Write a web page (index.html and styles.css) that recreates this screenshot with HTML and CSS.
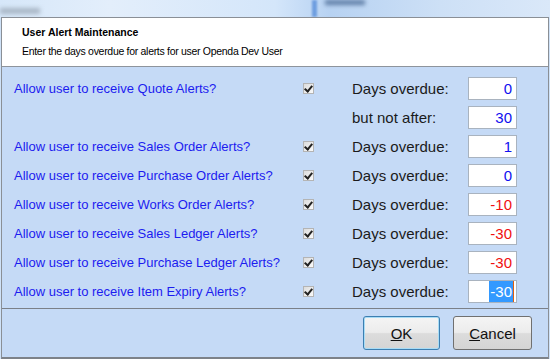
FILE: index.html
```html
<!DOCTYPE html>
<html lang="en">
<head>
    <meta charset="UTF-8">
    <title>User Alert Maintenance</title>
    <link rel="stylesheet" href="styles.css">
</head>
<body>
<div class="backdrop">
    <span class="blur-text"></span>
    <span class="blur-bar"></span>
    <span class="blur-chip"></span>
</div>
<div class="dialog">
    <div class="header">
        <div class="title">User Alert Maintenance</div>
        <div class="subtitle">Enter the days overdue for alerts for user Openda Dev User</div>
    </div>
    <div class="body">
        <div class="rows">
            <div class="label">Allow user to receive Quote Alerts?</div>
            <div class="check"><span class="box on"></span></div>
            <div class="field">Days overdue:</div>
            <div class="num">0</div>

            <div class="label"></div>
            <div class="check"></div>
            <div class="field">but not after:</div>
            <div class="num">30</div>

            <div class="label">Allow user to receive Sales Order Alerts?</div>
            <div class="check"><span class="box on"></span></div>
            <div class="field">Days overdue:</div>
            <div class="num">1</div>

            <div class="label">Allow user to receive Purchase Order Alerts?</div>
            <div class="check"><span class="box on"></span></div>
            <div class="field">Days overdue:</div>
            <div class="num">0</div>

            <div class="label">Allow user to receive Works Order Alerts?</div>
            <div class="check"><span class="box on"></span></div>
            <div class="field">Days overdue:</div>
            <div class="num neg">-10</div>

            <div class="label">Allow user to receive Sales Ledger Alerts?</div>
            <div class="check"><span class="box on"></span></div>
            <div class="field">Days overdue:</div>
            <div class="num neg">-30</div>

            <div class="label">Allow user to receive Purchase Ledger Alerts?</div>
            <div class="check"><span class="box on"></span></div>
            <div class="field">Days overdue:</div>
            <div class="num neg">-30</div>

            <div class="label">Allow user to receive Item Expiry Alerts?</div>
            <div class="check"><span class="box on"></span></div>
            <div class="field">Days overdue:</div>
            <div class="num sel"><span class="hl">-30</span><span class="caret"></span></div>
        </div>
        <div class="footer">
            <button class="btn default"><u>O</u>K</button>
            <button class="btn cancel"><u>C</u>ancel</button>
        </div>
    </div>
</div>
</body>
</html>
```

FILE: styles.css
```css
*{
    margin: 0;
    padding: 0;
    box-sizing: border-box;
}
body{
    width: 550px;
    height: 359px;
    overflow: hidden;
    font-family: "Liberation Sans", Arial, sans-serif;
    background: #cfe2f8;
}
.backdrop{
    position: relative;
    height: 17px;
    background: linear-gradient(90deg, #d6e7f9 0%, #e3eefb 20%, #d4e6fa 50%, #b7d2f2 60%, #cde0f6 80%, #dae8f9 100%);
    overflow: hidden;
}
.blur-text{
    position: absolute;
    left: 0;
    top: 8px;
    width: 40px;
    height: 6px;
    background: #a9b7c6;
    filter: blur(2px);
}
.blur-bar{
    position: absolute;
    left: 312px;
    top: 0;
    width: 5px;
    height: 17px;
    background: #6e9ee0;
    filter: blur(1px);
}
.blur-chip{
    position: absolute;
    left: 325px;
    top: 0;
    width: 40px;
    height: 5px;
    background: #5f7ea6;
    filter: blur(2px);
}
.dialog{
    height: 342px;
    margin: 0 1px 0 1px;
    border: 1px solid #8a8f96;
    border-bottom: 2px solid #7d8289;
    display: flex;
    flex-direction: column;
}
.header{
    height: 49px;
    background: #fff;
    border-bottom: 1px solid #8e949c;
    padding: 6px 0 0 20px;
    font-size: 10.5px;
    color: #000;
}
.title{
    font-weight: bold;
    line-height: 16px;
}
.subtitle{
    margin-top: 3px;
    line-height: 16px;
    letter-spacing: -0.3px;
}
.body{
    flex: 1;
    background: #c5daf6;
    display: flex;
    flex-direction: column;
}
.rows{
    display: grid;
    grid-template-columns: 289px 49px 116px 49px;
    grid-auto-rows: 29px;
    padding: 7px 0 2px 12px;
    border-bottom: 1px solid #7b8088;
    align-items: center;
}
.label{
    color: #1c1cf0;
    font-size: 13px;
    white-space: nowrap;
}
.check{
    display: flex;
    align-items: center;
}
.box{
    width: 11px;
    height: 11px;
    background: linear-gradient(135deg, #dcdcdc, #fafafa);
    border: 1px solid #b4b4b4;
    position: relative;
}
.box.on::after{
    content: "";
    position: absolute;
    left: 2px;
    top: 0;
    width: 3px;
    height: 6px;
    border-right: 2px solid #222;
    border-bottom: 2px solid #222;
    transform: rotate(40deg);
}
.field{
    font-size: 15px;
    color: #1b1b1b;
}
.num{
    height: 23px;
    background: #fff;
    border: 1px solid #a9b3bf;
    color: #1010f0;
    font-size: 15px;
    text-align: right;
    padding-right: 4px;
    line-height: 21px;
}
.num.neg{
    color: #f01010;
}
.num.sel{
    padding-right: 2px;
    display: flex;
    justify-content: flex-end;
    align-items: stretch;
}
.hl{
    background: #3399ff;
    color: #fff;
    padding: 0 1px;
}
.caret{
    width: 1px;
    background: #e06010;
}
.footer{
    flex: 1;
    display: flex;
    justify-content: flex-end;
    align-items: center;
    gap: 13px;
    padding-right: 16px;
}
.btn{
    width: 77px;
    height: 34px;
    font-family: "Liberation Sans", Arial, sans-serif;
    font-size: 15px;
    color: #111;
    border: 1px solid #707070;
    border-radius: 3px;
    background: linear-gradient(#f4f4f4 0%, #ececec 48%, #dcdcdc 52%, #d4d4d4 100%);
}
.btn.cancel{
    width: 79px;
}
.btn.default{
    border-color: #3c7fb1;
    box-shadow: inset 0 0 0 1px #a8dcf6;
}
```
